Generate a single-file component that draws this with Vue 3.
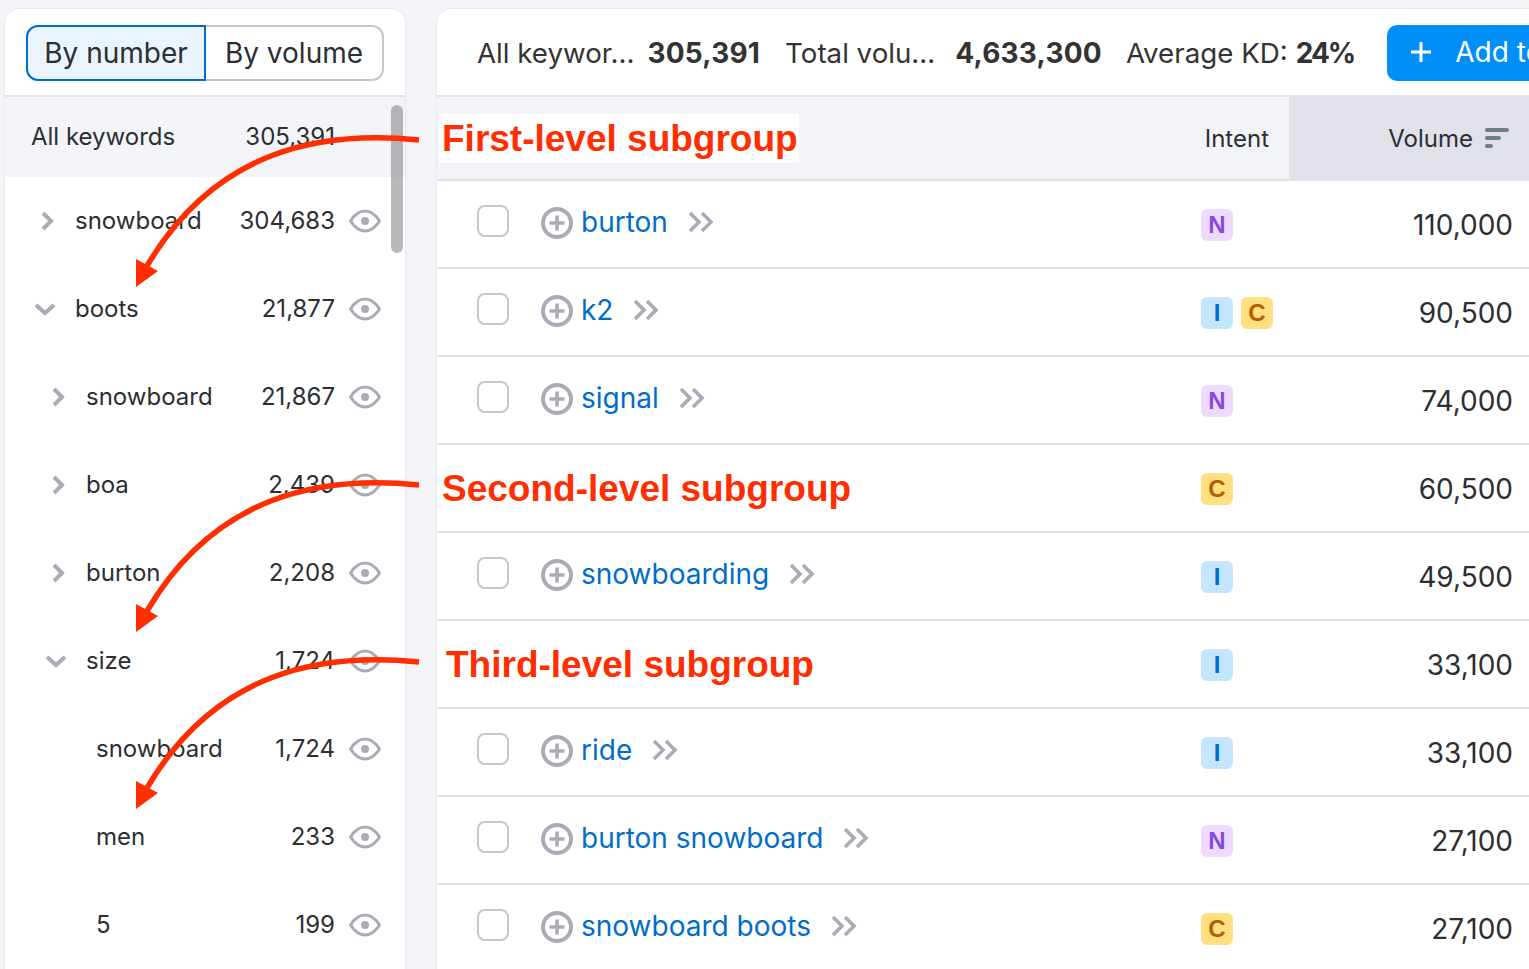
<template>
  <div class="page">
    <aside class="side">
      <div class="side_top">
        <div class="toggle">
          <button class="toggle_btn active">By number</button>
          <button class="toggle_btn">By volume</button>
        </div>
      </div>
      <div class="side_all">
        <span class="side_name">All keywords</span>
        <span class="side_count">305,391</span>
      </div>
      <div v-for="g in groups" :key="g.id" class="side_row" :class="'lvl' + g.level">
        <span class="side_chev">
          <svg v-if="g.icon === 'right'" class="chev_right" width="16" height="20" viewBox="0 0 16 20">
            <path d="M3 2l8 8-8 8" fill="none" stroke="#a9abb8" stroke-width="4" />
          </svg>
          <svg v-if="g.icon === 'down'" class="chev_down" width="22" height="14" viewBox="0 0 22 14">
            <path d="M2 3l9 8 9-8" fill="none" stroke="#a9abb8" stroke-width="4" />
          </svg>
        </span>
        <span class="side_name">{{ g.name }}</span>
        <span class="side_count">{{ g.count }}</span>
        <svg class="eye" width="32" height="24" viewBox="0 0 32 24">
          <path d="M1.500 12C6 5 10.500 2 16 2s10 3 14.500 10C26 19 21.500 22 16 22S6 19 1.500 12z" fill="none" stroke="#a9abb8" stroke-width="3" />
          <circle cx="16" cy="12" r="4" fill="#a9abb8" />
        </svg>
      </div>
      <div class="scrollbar"></div>
    </aside>

    <main class="main">
      <div class="main_top">
        <span>All keywor...</span><b class="stat">305,391</b>
        <span>Total volu...</span><b class="stat second">4,633,300</b>
        <span>Average KD:</span><b class="stat last">24%</b>
        <button class="add_btn">
          <svg width="22" height="22" viewBox="0 0 22 22">
            <path d="M11 1v20M1 11h20" stroke="#fff" stroke-width="3" />
          </svg>
          Add to keyword list
        </button>
      </div>
      <div class="thead">
        <div class="col_kw"></div>
        <div class="col_intent">Intent</div>
        <div class="col_vol">
          Volume
          <svg width="24" height="20" viewBox="0 0 24 20">
            <rect x="0" y="0" width="24" height="4" rx="2" fill="#6b7f87" />
            <rect x="0" y="8" width="16" height="4" rx="2" fill="#6b7f87" />
            <rect x="0" y="16" width="8" height="4" rx="2" fill="#6b7f87" />
          </svg>
        </div>
      </div>
      <div v-for="r in rows" :key="r.id" class="row">
        <div class="col_kw">
          <template v-if="r.kw">
            <span class="check"></span>
            <svg class="plus" width="32" height="32" viewBox="0 0 32 32">
              <circle cx="16" cy="16" r="14" fill="none" stroke="#a9abb8" stroke-width="4" />
              <path d="M16 8.500v15M8.500 16h15" stroke="#a9abb8" stroke-width="3.500" />
            </svg>
            <a class="kw">{{ r.kw }}</a>
            <svg class="dbl" width="26" height="22" viewBox="0 0 26 22">
              <path d="M2 2l9 9-9 9M14 2l9 9-9 9" fill="none" stroke="#a9abb8" stroke-width="3.600" />
            </svg>
          </template>
        </div>
        <div class="col_intent badges">
          <span v-for="b in r.intent" :key="b" class="badge" :class="'b' + b">{{ b }}</span>
        </div>
        <div class="col_vol val">{{ r.vol }}</div>
      </div>
    </main>

    <!-- annotations drawn on top of the screenshot -->
    <svg class="arrows" width="1529" height="969" viewBox="0 0 1529 969">
      <g v-for="a in arrows" :key="a.id" :transform="'translate(0 ' + a.dy + ')'">
        <path d="M419 140C320 130 215 150 147 266" fill="none" stroke="#ff2d00" stroke-width="5.500" />
        <path d="M136 287V259L158 271z" fill="#ff2d00" />
      </g>
    </svg>
    <div class="note n1">First-level subgroup</div>
    <div class="note n2">Second-level subgroup</div>
    <div class="note n3">Third-level subgroup</div>
  </div>
</template>

<script setup>
const groups = [
  { id: 1, name: "snowboard", count: "304,683", level: 0, icon: "right" },
  { id: 2, name: "boots", count: "21,877", level: 0, icon: "down" },
  { id: 3, name: "snowboard", count: "21,867", level: 1, icon: "right" },
  { id: 4, name: "boa", count: "2,439", level: 1, icon: "right" },
  { id: 5, name: "burton", count: "2,208", level: 1, icon: "right" },
  { id: 6, name: "size", count: "1,724", level: 1, icon: "down" },
  { id: 7, name: "snowboard", count: "1,724", level: 2 },
  { id: 8, name: "men", count: "233", level: 2 },
  { id: 9, name: "5", count: "199", level: 2 },
];

const rows = [
  { id: 1, kw: "burton", intent: ["N"], vol: "110,000" },
  { id: 2, kw: "k2", intent: ["I", "C"], vol: "90,500" },
  { id: 3, kw: "signal", intent: ["N"], vol: "74,000" },
  { id: 4, kw: "", intent: ["C"], vol: "60,500" },
  { id: 5, kw: "snowboarding", intent: ["I"], vol: "49,500" },
  { id: 6, kw: "", intent: ["I"], vol: "33,100" },
  { id: 7, kw: "ride", intent: ["I"], vol: "33,100" },
  { id: 8, kw: "burton snowboard", intent: ["N"], vol: "27,100" },
  { id: 9, kw: "snowboard boots", intent: ["C"], vol: "27,100" },
];

const arrows = [
  { id: 1, dy: 0 },
  { id: 2, dy: 345 },
  { id: 3, dy: 522 },
];
</script>

<style>
html, body {
  margin: 0;
  overflow: hidden;
  background: #f3f4f8;
}
</style>

<style scoped>
.page {
  position: relative;
  display: flex;
  gap: 32px;
  width: 1529px;
  height: 969px;
  padding: 9px 0 0 5px;
  box-sizing: border-box;
  overflow: hidden;
  font-family: Inter, "Liberation Sans", sans-serif;
  color: #2b2e33;
}

.side {
  position: relative;
  flex: none;
  width: 400px;
  height: 1000px;
  background: #fff;
  border-radius: 14px 14px 0 0;
  box-shadow: 0 0 0 1px #e9eaf0;
  font-size: 24px;
}

.side_top {
  height: 88px;
  padding: 16px 21px 0;
  box-sizing: border-box;
  border-bottom: 2px solid #e0e1e9;
}

.toggle {
  display: flex;
  width: 358px;
  height: 56px;
}

.toggle_btn {
  flex: 1;
  margin: 0;
  padding: 0;
  font: inherit;
  font-size: 28px;
  color: #2b2e33;
  background: #fff;
  border: 2px solid #c4c7cf;
  border-left: 0;
  border-radius: 0 12px 12px 0;
}

.toggle_btn.active {
  flex: none;
  width: 180px;
  background: #e9f4ff;
  border: 2px solid #006dca;
  border-radius: 12px 0 0 12px;
}

.side_all {
  display: flex;
  align-items: center;
  height: 80px;
  padding: 0 70px 0 26px;
  background: #f3f4f8;
}

.side_row {
  display: flex;
  align-items: center;
  height: 88px;
  padding-right: 24px;
}

.side_name, .side_count {
  margin-bottom: 2px;
}

.side_chev {
  flex: none;
  display: flex;
  align-items: center;
  width: 42px;
}

.chev_right {
  margin-left: 7px;
}

.chev_down {
  margin-left: 1px;
}

.lvl0 { padding-left: 28px; }
.lvl1 { padding-left: 39px; }
.lvl2 { padding-left: 49px; }

.side_count {
  margin-left: auto;
}

.eye {
  flex: none;
  margin-left: 14px;
}

.scrollbar {
  position: absolute;
  top: 96px;
  right: 2px;
  width: 12px;
  height: 148px;
  border-radius: 6px;
  background: rgba(100, 100, 105, 0.45);
}

.main {
  flex: none;
  width: 1220px;
  height: 1000px;
  background: #fff;
  border-radius: 14px 0 0 0;
  box-shadow: 0 0 0 1px #e9eaf0;
  overflow: hidden;
}

.main_top {
  display: flex;
  align-items: center;
  height: 88px;
  padding: 2px 0 0 40px;
  box-sizing: border-box;
  border-bottom: 2px solid #e0e1e9;
  font-size: 27.700px;
  color: #333;
  white-space: nowrap;
}

.stat {
  font-size: 28px;
  letter-spacing: 0.200px;
  margin: 0 25px 0 13px;
}

.stat.second {
  margin: 0 24px 0 20px;
}

.stat.last {
  margin: 0 33px 0 8px;
  letter-spacing: -2px;
}

.add_btn {
  display: flex;
  align-items: center;
  gap: 23px;
  flex: none;
  height: 56px;
  padding: 0 24px 2px 23px;
  font: inherit;
  font-size: 28px;
  color: #fff;
  background: #008ff8;
  border: 0;
  border-radius: 10px;
}

.thead, .row {
  display: flex;
}

.thead {
  height: 84px;
  background: #f3f4f8;
  border-bottom: 2px solid #e0e1e9;
  font-size: 24px;
  box-sizing: border-box;
}

.row {
  height: 88px;
  border-bottom: 2px solid #e0e1e9;
  box-sizing: border-box;
}

.col_kw {
  flex: none;
  display: flex;
  align-items: center;
  width: 764px;
  padding: 0 0 5px 40px;
  box-sizing: border-box;
}

.col_intent {
  flex: none;
  display: flex;
  align-items: center;
  justify-content: flex-end;
  width: 88px;
  padding-right: 20px;
  box-sizing: border-box;
}

.col_vol {
  flex: none;
  display: flex;
  align-items: center;
  justify-content: flex-end;
  gap: 12px;
  width: 240px;
  padding-right: 20px;
  box-sizing: border-box;
}

.thead .col_vol {
  background: #e0e1e9;
  height: 86px;
  margin-top: -2px;
}

.check {
  flex: none;
  width: 32px;
  height: 32px;
  margin: -2px 32px 0 0;
  box-sizing: border-box;
  border: 2px solid #c4c7cf;
  border-radius: 8px;
}

.plus {
  flex: none;
  margin: 2px 8px 0 0;
}

.kw {
  font-size: 28px;
  color: #006dca;
  white-space: nowrap;
}

.dbl {
  flex: none;
  margin-left: 20px;
}

.badges {
  justify-content: flex-start;
  gap: 8px;
  padding: 2px 0 0 0;
}

.badge {
  display: flex;
  align-items: center;
  justify-content: center;
  width: 32px;
  height: 32px;
  border-radius: 6px;
  font-size: 24px;
  font-weight: 700;
  font-family: "Liberation Sans", sans-serif;
}

.bN { background: #eedaff; color: #8649e1; }
.bI { background: #c4e5fe; color: #006dca; }
.bC { background: #ffdf80; color: #b25e00; }

.val {
  font-size: 28px;
  padding: 2px 16px 0 0;
}

.arrows {
  position: absolute;
  top: 0;
  left: 0;
  pointer-events: none;
}

.note {
  position: absolute;
  font-family: "Liberation Sans", sans-serif;
  font-weight: 700;
  font-size: 37px;
  line-height: 49px;
  color: #ff2d00;
  background: #fff;
  padding: 0 3px;
  white-space: nowrap;
}

.n1 { left: 439px; top: 114px; padding-right: 1px; }
.n2 { left: 439px; top: 464px; }
.n3 { left: 443px; top: 640px; }
</style>
